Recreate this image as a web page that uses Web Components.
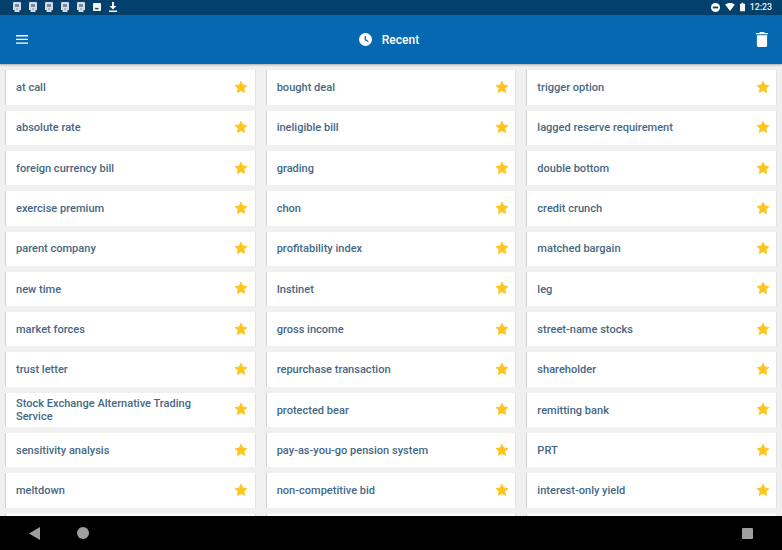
<!DOCTYPE html>
<html>
<head>
<meta charset="utf-8">
<title>Recent</title>
<style>
  html, body { margin: 0; padding: 0; height: 100%; }
  body { width: 782px; height: 550px; overflow: hidden; font-family: Roboto, sans-serif; background: #f0f0f0; display: flex; flex-direction: column; }
  term-list { flex: 1; min-height: 0; }
</style>
</head>
<body>
<status-bar></status-bar>
<app-bar title="Recent"></app-bar>
<term-list>
  <term-card>at call</term-card><term-card>bought deal</term-card><term-card>trigger option</term-card>
  <term-card>absolute rate</term-card><term-card>ineligible bill</term-card><term-card>lagged reserve requirement</term-card>
  <term-card>foreign currency bill</term-card><term-card>grading</term-card><term-card>double bottom</term-card>
  <term-card>exercise premium</term-card><term-card>chon</term-card><term-card>credit crunch</term-card>
  <term-card>parent company</term-card><term-card>profitability index</term-card><term-card>matched bargain</term-card>
  <term-card>new time</term-card><term-card>Instinet</term-card><term-card>leg</term-card>
  <term-card>market forces</term-card><term-card>gross income</term-card><term-card>street-name stocks</term-card>
  <term-card>trust letter</term-card><term-card>repurchase transaction</term-card><term-card>shareholder</term-card>
  <term-card>Stock Exchange Alternative Trading Service</term-card><term-card>protected bear</term-card><term-card>remitting bank</term-card>
  <term-card>sensitivity analysis</term-card><term-card>pay-as-you-go pension system</term-card><term-card>PRT</term-card>
  <term-card>meltdown</term-card><term-card>non-competitive bid</term-card><term-card>interest-only yield</term-card>
  <term-card></term-card><term-card></term-card><term-card></term-card>
</term-list>
<nav-bar></nav-bar>
<script>
const SIM = '<svg width="8" height="10" viewBox="0 0 8 10"><path fill="#d5dde4" d="M1 0h6a1 1 0 0 1 1 1v7H6.500v2h-5V8H0V1a1 1 0 0 1 1-1z"/><path fill="#6f8ba3" d="M2 2h4v3H2zM3 6.500h2v1H3z"/></svg>';

class StatusBar extends HTMLElement {
  constructor() {
    super();
    this.attachShadow({ mode: 'open' });
    this.shadowRoot.innerHTML = `
      <style>
        :host { display: flex; align-items: center; height: 14.5px; flex: none; background: #04406c; color: #f0f3f6; padding: 0 10px 0 13px; font: 500 8.8px Roboto, sans-serif; }
        .left { display: flex; align-items: center; gap: 8px; }
        .right { display: flex; align-items: center; margin-left: auto; gap: 5px; }
        svg { display: block; }
      </style>
      <div class="left">
        ${SIM}${SIM}${SIM}${SIM}${SIM}
        <svg width="8" height="8" viewBox="0 0 9 9"><rect width="9" height="9" rx="1" fill="#f4f6f8"/><path fill="#04406c" d="M2 7l1-2 1 1 1-1 2 2z"/></svg>
        <svg width="8" height="10" viewBox="0 0 8 10"><path fill="#f4f6f8" d="M3 0h2v4h2.500L4 7.400.5 4H3zM0 8.600h8V10H0z"/></svg>
      </div>
      <div class="right">
        <svg width="9" height="9" viewBox="0 0 10 10"><circle cx="5" cy="5" r="5" fill="#fff"/><rect x="2" y="4" width="6" height="2" fill="#04406c"/></svg>
        <svg width="10" height="8" viewBox="0 0 11 9"><path fill="#fff" d="M0 1.800C3-.6 8-.6 11 1.800L5.500 9z"/></svg>
        <svg width="5" height="10" viewBox="0 0 6 10"><path fill="#f4f6f8" d="M2 0h2v1h2v9H0V1h2z"/></svg>
        <span>12:23</span>
      </div>`;
  }
}

class AppBar extends HTMLElement {
  constructor() {
    super();
    this.attachShadow({ mode: 'open' });
    this.shadowRoot.innerHTML = `
      <style>
        :host { display: flex; align-items: center; position: relative; z-index: 1; height: 49px; flex: none; background: #0568b0; color: #fff; padding: 0 14px 0 16px; box-shadow: 0 1px 2px rgba(0,0,0,.3); font: 500 12px Roboto, sans-serif; }
        .title { flex: 1; display: flex; justify-content: center; align-items: center; gap: 10px; padding-right: 6px; padding-top: 1px; }
        .title svg { margin-top: -1px; }
        svg { display: block; }
      </style>
      <svg width="12" height="9" viewBox="0 0 12 9"><path fill="#fff" d="M0 0h12v1.400H0zM0 3.700h12v1.400H0zM0 7.400h12v1.400H0z"/></svg>
      <div class="title">
        <svg width="13" height="13" viewBox="0 0 13 13"><circle cx="6.500" cy="6.500" r="6.500" fill="#fff"/><path fill="none" stroke="#0568b0" stroke-width="1.300" d="M6.300 3v3.800l3 1.700"/></svg>
        <span class="t"></span>
      </div>
      <svg width="12" height="15" viewBox="0 0 12 15"><path fill="#fff" d="M4 0h4l.8 1H12v1.300H0V1h3.200zM.9 3.300h10.200V13.400A1.600 1.600 0 0 1 9.500 15H2.500A1.600 1.600 0 0 1 .9 13.400z"/></svg>`;
    this.shadowRoot.querySelector('.t').textContent = this.getAttribute('title');
  }
}

class TermList extends HTMLElement {
  constructor() {
    super();
    this.attachShadow({ mode: 'open' });
    this.shadowRoot.innerHTML = `
      <style>
        :host { display: block; overflow: hidden; }
        .grid { display: grid; grid-template-columns: repeat(3, 1fr); column-gap: 12px; row-gap: 6px; padding: 6.7px 6px 0 6px; grid-auto-rows: 34.33px; }
      </style>
      <div class="grid"><slot></slot></div>`;
  }
}

class TermCard extends HTMLElement {
  constructor() {
    super();
    this.attachShadow({ mode: 'open' });
    this.shadowRoot.innerHTML = `
      <style>
        :host { display: flex; align-items: center; background: #fff; box-shadow: -1px 0 0 rgba(0,0,0,.13), 1px 0 0 rgba(0,0,0,.05); padding: 0 7px 0 10px; color: #466885; font: 500 11.05px/12.5px Roboto, sans-serif; min-width: 0; }
        .text { flex: 1; padding-right: 30px; padding-top: 2px; }
        svg { display: block; flex: none; }
      </style>
      <div class="text"><slot></slot></div>
      <svg width="14" height="14" viewBox="0 0 24 24" style="margin:-1px -.5px 0"><path fill="#fdc51e" stroke="#fdc51e" stroke-width="1.500" stroke-linejoin="round" d="M12 2l3 6.600 7.200.9-5.300 4.900 1.400 7.100L12 17.900l-6.300 3.600 1.400-7.100L1.800 9.500l7.200-.9z"/></svg>`;
  }
}

class NavBar extends HTMLElement {
  constructor() {
    super();
    this.attachShadow({ mode: 'open' });
    this.shadowRoot.innerHTML = `
      <style>
        :host { display: flex; align-items: center; position: relative; z-index: 1; height: 34px; flex: none; background: #000; padding: 0 29px; }
        svg { display: block; }
      </style>
      <svg width="11" height="13" viewBox="0 0 11 13"><path fill="#9e9e9e" d="M11 0v13L0 6.500z"/></svg>
      <svg width="12" height="12" viewBox="0 0 12 12" style="margin-left:37px"><circle cx="6" cy="6" r="6" fill="#9e9e9e"/></svg>
      <svg width="11" height="11" viewBox="0 0 11 11" style="margin-left:auto"><rect width="11" height="11" rx="1" fill="#9e9e9e"/></svg>`;
  }
}

customElements.define('status-bar', StatusBar);
customElements.define('app-bar', AppBar);
customElements.define('term-list', TermList);
customElements.define('term-card', TermCard);
customElements.define('nav-bar', NavBar);
</script>
</body>
</html>
